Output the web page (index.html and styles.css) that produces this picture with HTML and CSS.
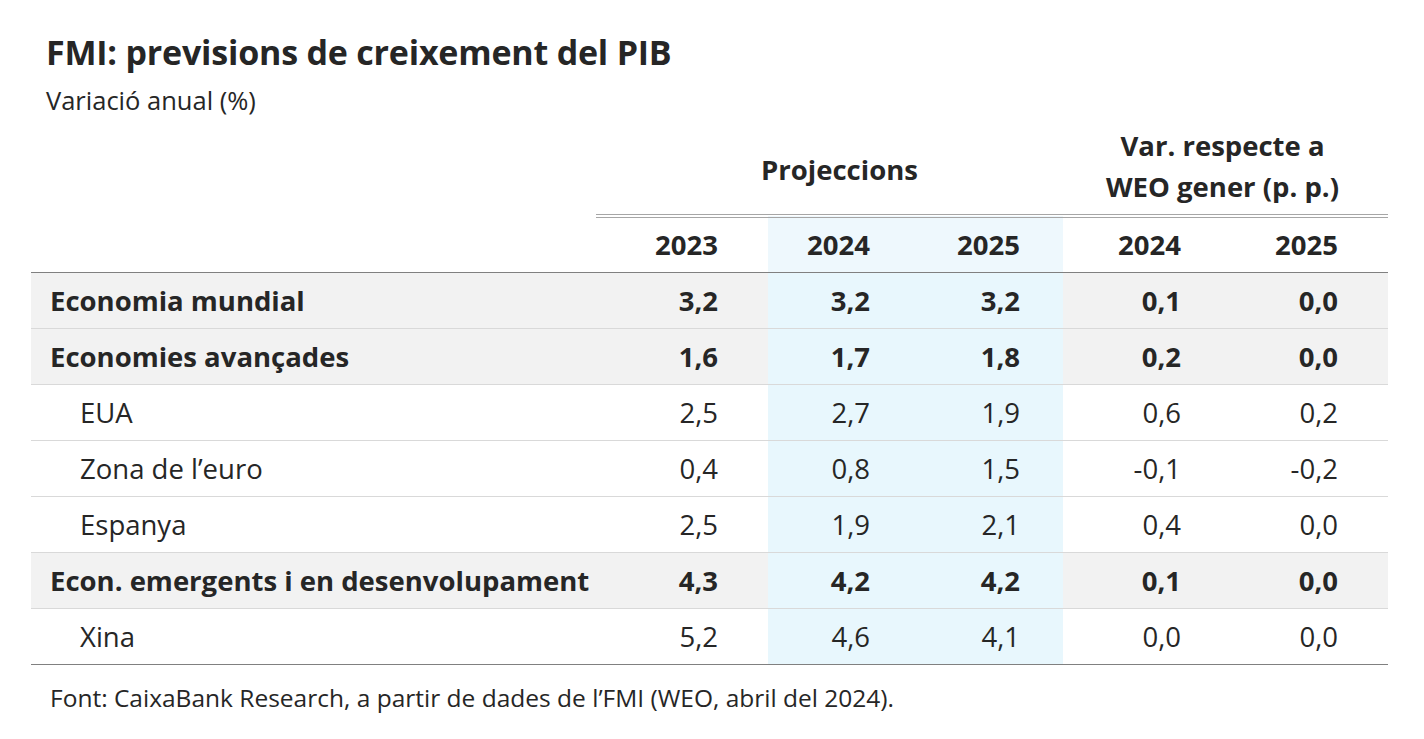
FILE: index.html
```html
<!DOCTYPE html>
<html lang="ca">
<head>
<meta charset="utf-8">
<title>FMI: previsions de creixement del PIB</title>
<link rel="stylesheet" href="styles.css">
</head>
<body>
<div class="page">
  <h1 class="title">FMI: previsions de creixement del PIB</h1>
  <p class="subtitle">Variació anual (%)</p>
  <table class="tbl">
    <colgroup>
      <col class="c-label">
      <col class="c-2023">
      <col class="c-p24">
      <col class="c-p25">
      <col class="c-v24">
      <col class="c-v25">
    </colgroup>
    <thead>
      <tr class="group-row">
        <th class="blank"></th>
        <th class="group proj" colspan="3">Projeccions</th>
        <th class="group var" colspan="2">Var. respecte a<br>WEO gener (p. p.)</th>
      </tr>
      <tr class="year-row">
        <th class="blank"></th>
        <th class="n n23">2023</th>
        <th class="n n24 hl">2024</th>
        <th class="n n25 hl">2025</th>
        <th class="n v24">2024</th>
        <th class="n v25">2025</th>
      </tr>
    </thead>
    <tbody>
      <tr class="agg">
        <td class="lbl">Economia mundial</td>
        <td class="n n23">3,2</td><td class="n n24 hl">3,2</td><td class="n n25 hl">3,2</td><td class="n v24">0,1</td><td class="n v25">0,0</td>
      </tr>
      <tr class="agg">
        <td class="lbl">Economies avançades</td>
        <td class="n n23">1,6</td><td class="n n24 hl">1,7</td><td class="n n25 hl">1,8</td><td class="n v24">0,2</td><td class="n v25">0,0</td>
      </tr>
      <tr class="sub">
        <td class="lbl">EUA</td>
        <td class="n n23">2,5</td><td class="n n24 hl">2,7</td><td class="n n25 hl">1,9</td><td class="n v24">0,6</td><td class="n v25">0,2</td>
      </tr>
      <tr class="sub">
        <td class="lbl">Zona de l’euro</td>
        <td class="n n23">0,4</td><td class="n n24 hl">0,8</td><td class="n n25 hl">1,5</td><td class="n v24">-0,1</td><td class="n v25">-0,2</td>
      </tr>
      <tr class="sub">
        <td class="lbl">Espanya</td>
        <td class="n n23">2,5</td><td class="n n24 hl">1,9</td><td class="n n25 hl">2,1</td><td class="n v24">0,4</td><td class="n v25">0,0</td>
      </tr>
      <tr class="agg">
        <td class="lbl">Econ. emergents i en desenvolupament</td>
        <td class="n n23">4,3</td><td class="n n24 hl">4,2</td><td class="n n25 hl">4,2</td><td class="n v24">0,1</td><td class="n v25">0,0</td>
      </tr>
      <tr class="sub last">
        <td class="lbl">Xina</td>
        <td class="n n23">5,2</td><td class="n n24 hl">4,6</td><td class="n n25 hl">4,1</td><td class="n v24">0,0</td><td class="n v25">0,0</td>
      </tr>
    </tbody>
  </table>
  <p class="source">Font: CaixaBank Research, a partir de dades de l’FMI (WEO, abril del 2024).</p>
</div>
</body>
</html>
```
FILE: styles.css
```css
* { box-sizing: border-box; }
html, body { margin: 0; padding: 0; background: #ffffff; }
body {
  font-family: "Open Sans", "Noto Sans", "Liberation Sans", sans-serif;
  color: #262626;
}
.page {
  width: 1424px;
  height: 739px;
  padding: 30px 36px 0 31px;
}
.title {
  margin: 0 0 0 15px;
  font-size: 34px;
  line-height: 44px;
  font-weight: 700;
  letter-spacing: -0.2px;
}
.subtitle {
  margin: 10px 0 9px 15px;
  font-size: 25.5px;
  line-height: 32px;
  font-weight: 400;
}
.tbl {
  border-collapse: collapse;
  table-layout: fixed;
  width: 1357px;
  font-size: 27.5px;
}
.c-label { width: 565px; }
.c-2023 { width: 172px; }
.c-p24 { width: 148px; }
.c-p25 { width: 147px; }
.c-v24 { width: 165px; }
.c-v25 { width: 160px; }

.tbl th, .tbl td { padding: 0; font-weight: 400; }

.group-row th { height: 91px; vertical-align: top; }
.group {
  font-weight: 700 !important;
  line-height: 41px;
  text-align: center;
  border-bottom: 4px double #a6a6a6;
}
.group.proj { padding-left: 20px; padding-top: 24px; }
.group.var { padding-right: 6px; }

.year-row th {
  height: 56px;
  font-weight: 700;
  border-bottom: 1px solid #808080;
}

.n { text-align: right; }
.n23 { padding-right: 50px !important; }
.n24 { padding-right: 46px !important; }
.n25 { padding-right: 43px !important; }
.v24 { padding-right: 47px !important; }
.v25 { padding-right: 50px !important; }

.year-row .n { font-weight: 700; }
.year-row .hl { background: #eef8fd; }

tbody td {
  height: 56px;
  border-bottom: 1px solid #d9d9d9;
  vertical-align: middle;
}
tbody tr.last td { border-bottom: 1px solid #808080; }
tbody .hl { background: #e8f7fd; }
tr.agg td { background: #f2f2f2; font-weight: 700; }
tr.agg td.hl { background: #e8f7fd; }
tr.agg .lbl { padding-left: 19px; }
tr.sub .lbl { padding-left: 49px; }

.source {
  margin: 20px 0 0 19px;
  font-size: 24.5px;
  line-height: 26px;
}
```
